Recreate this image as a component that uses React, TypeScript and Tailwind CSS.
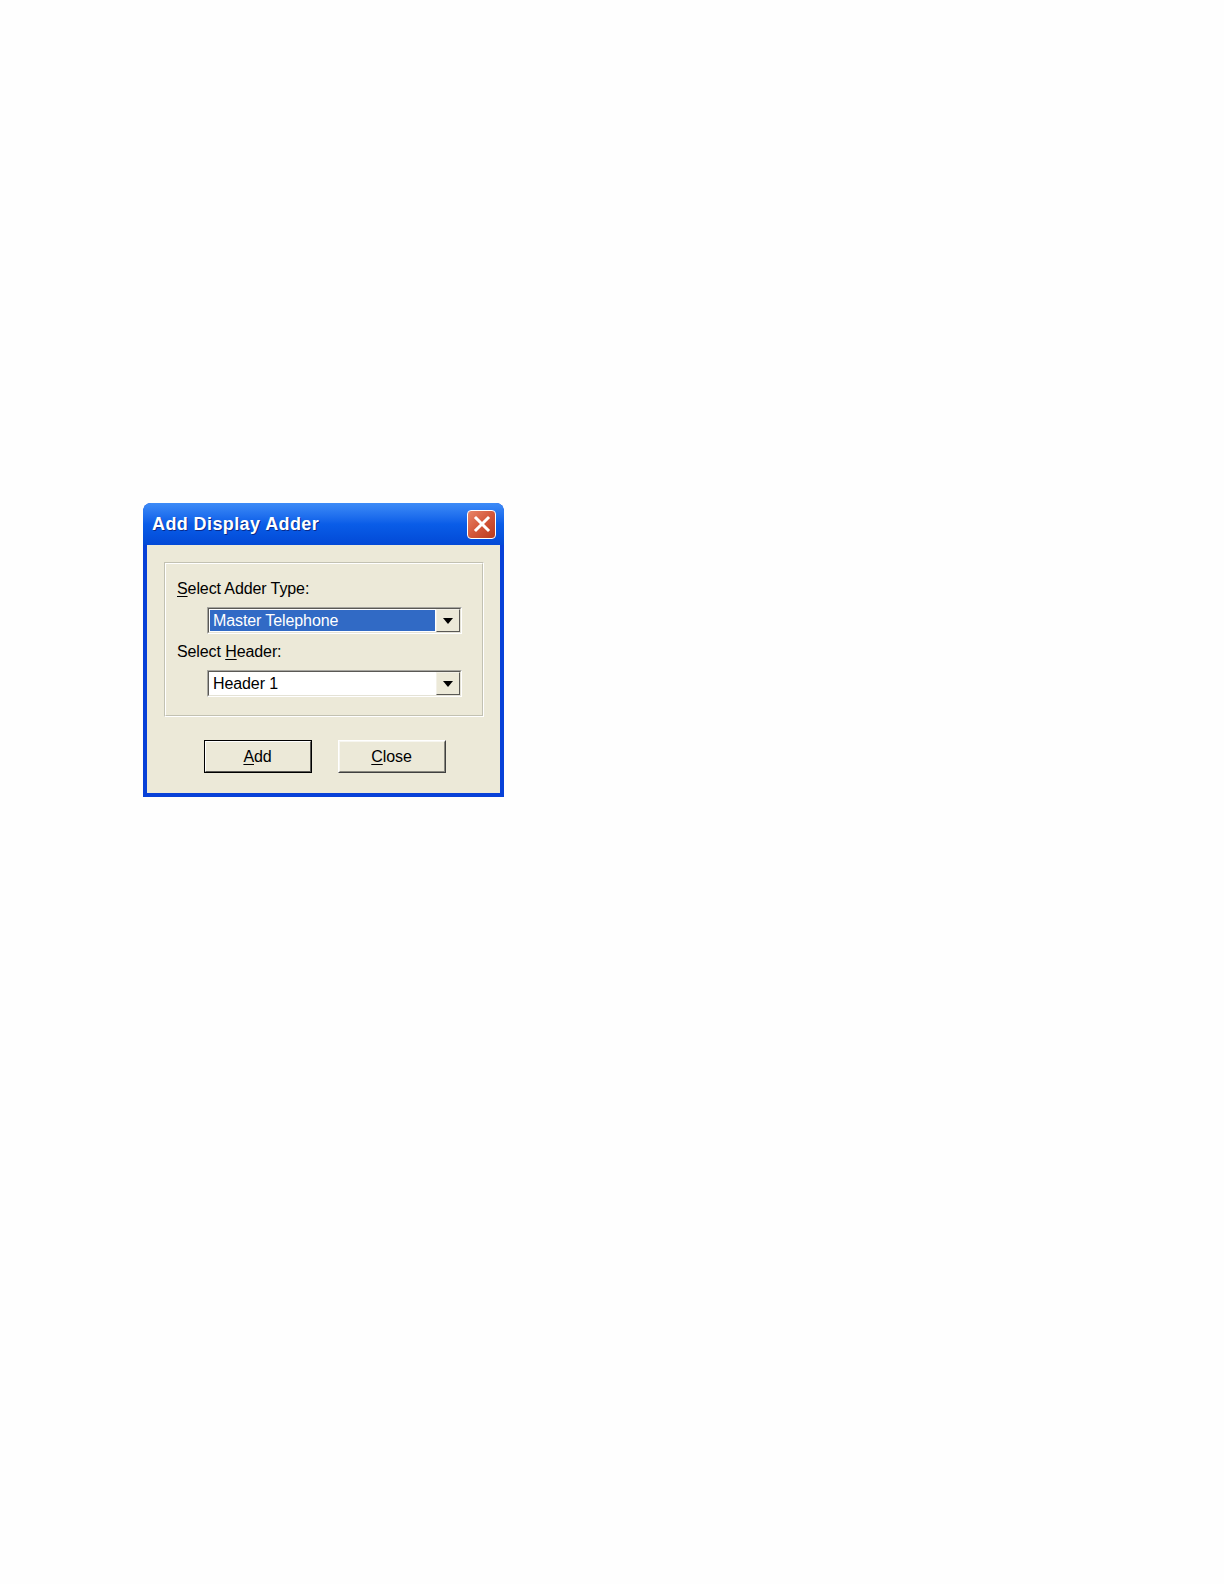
import React from "react";

// Windows XP style "Add Display Adder" dialog

const uiFont = { fontFamily: '"Liberation Sans", Arial, sans-serif' };

function ComboBox({ value, selected }: { value: string; selected?: boolean }) {
  return (
    <div className="w-[255px] h-[27px] border border-t-[#a7a6a0] border-l-[#a7a6a0] border-b-white border-r-white">
      <div className="h-full flex border border-t-[#5a5955] border-l-[#5a5955] border-b-[#e4e2d6] border-r-[#e4e2d6] bg-white">
        <div className="flex-1 p-[1px]">
          {selected ? (
            <div className="h-full bg-[#316ac5] text-white text-[16px] leading-[21px] pl-[3px] tracking-[-0.1px]">
              {value}
            </div>
          ) : (
            <div className="h-full text-black text-[16px] leading-[21px] pl-[3px] tracking-[-0.1px]">
              {value}
            </div>
          )}
        </div>
        <div className="w-[24px] h-full border border-t-[#f3f1e8] border-l-[#f3f1e8] border-b-[#5a5955] border-r-[#5a5955] bg-[#ece9d8] flex items-center justify-center">
          <svg width="10" height="6" viewBox="0 0 10 6">
            <path d="M0 0 H10 L5 6 Z" fill="#000" />
          </svg>
        </div>
      </div>
    </div>
  );
}

function XPButton({ label, accel, isDefault }: { label: string; accel: string; isDefault?: boolean }) {
  const rest = label.slice(1);
  return (
    <div
      className={
        "w-[108px] h-[33px] " +
        (isDefault ? "border border-black" : "border border-t-white border-l-white border-b-[#404040] border-r-[#404040]")
      }
    >
      <div
        className={
          "h-full flex items-center justify-center bg-[#ece9d8] text-black text-[16px] tracking-[-0.1px] " +
          (isDefault
            ? "border border-t-white border-l-white border-b-[#5a5955] border-r-[#5a5955]"
            : "border border-t-[#f7f6f0] border-l-[#f7f6f0] border-b-[#8a8980] border-r-[#8a8980]")
        }
      >
        <span>
          <span className="underline underline-offset-2">{accel}</span>
          {rest}
        </span>
      </div>
    </div>
  );
}

export default function App() {
  return (
    <div className="min-h-[1584px] bg-[#fefefe] pt-[503px] pl-[143px]" style={uiFont}>
      <div className="w-[361px] rounded-t-[8px] bg-[#0841d8] flex flex-col">
        {/* title bar */}
        <div className="h-[42px] rounded-t-[8px] bg-gradient-to-b from-[#3d8bf7] via-[#0a5de8] to-[#0349d6] flex items-center justify-between pl-[9px] pr-[8px]">
          <span className="text-white font-bold text-[18px] tracking-[0.4px] [text-shadow:1px_1px_0_#0a2a8a]">
            Add Display Adder
          </span>
          <div className="w-[29px] h-[29px] rounded-[4px] border border-white bg-gradient-to-br from-[#e8866a] via-[#d4573a] to-[#b83a1c] flex items-center justify-center">
            <svg width="18" height="18" viewBox="0 0 18 18">
              <path d="M3 3 L15 15 M15 3 L3 15" stroke="#fff" strokeWidth="3" strokeLinecap="square" />
            </svg>
          </div>
        </div>

        {/* client area */}
        <div className="mx-[4px] mb-[4px] bg-[#ece9d8] pt-[17px] pl-[17px] pr-[16px] pb-[20px]">
          <div className="border border-t-[#c2c1b2] border-l-[#c2c1b2] border-b-white border-r-white">
            <div className="border border-t-white border-l-white border-b-[#c2c1b2] border-r-[#c2c1b2] pt-[15px] pb-[18px] pl-[11px]">
              <div className="text-[16px] leading-[19px] text-black tracking-[-0.1px]">
                <span className="underline underline-offset-2">S</span>elect Adder Type:
              </div>
              <div className="mt-[9px] pl-[30px]">
                <ComboBox value="Master Telephone" selected />
              </div>
              <div className="mt-[8px] text-[16px] leading-[19px] text-black tracking-[-0.1px]">
                Select <span className="underline underline-offset-2">H</span>eader:
              </div>
              <div className="mt-[9px] pl-[30px]">
                <ComboBox value="Header 1" />
              </div>
            </div>
          </div>

          <div className="mt-[23px] flex justify-center gap-[26px] pl-[1px]">
            <XPButton label="Add" accel="A" isDefault />
            <XPButton label="Close" accel="C" />
          </div>
        </div>
      </div>
    </div>
  );
}
